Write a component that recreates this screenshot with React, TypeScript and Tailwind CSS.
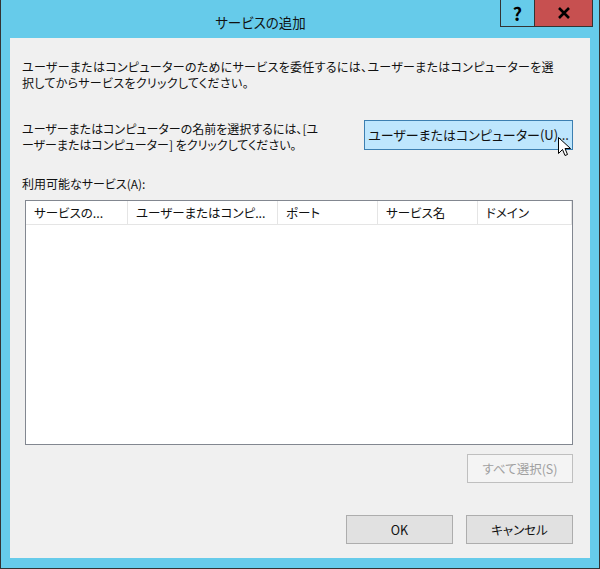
import React from "react";

const font = "font-['Noto_Sans_CJK_JP',sans-serif] [font-feature-settings:'palt']";

function Cursor() {
  return (
    <svg className="absolute left-[194px] top-[17px]" width="13" height="21" viewBox="0 0 13 21">
      <path
        d="M0.5 0.5 L0.5 16.5 L4.5 12.5 L7 18.5 L9.5 17.5 L7 11.5 L12.5 11.5 Z"
        fill="#fff"
        stroke="#000"
        strokeWidth="1"
        strokeLinejoin="miter"
      />
    </svg>
  );
}

export default function App() {
  const cols = [
    { label: "サービスの...", w: "w-[102px]" },
    { label: "ユーザーまたはコンピ...", w: "w-[150px]" },
    { label: "ポート", w: "w-[100px]" },
    { label: "サービス名", w: "w-[100px]" },
    { label: "ドメイン", w: "flex-1" },
  ];

  return (
    <div className={`w-[600px] h-[569px] flex flex-col bg-[#66cbea] border-x border-b border-[#333333] ${font}`}>
      {/* title bar */}
      <div className="h-[38px] flex items-start shrink-0">
        <div className="flex-1 h-[38px] flex items-center justify-center pl-[20px] pt-[6px] text-[13.5px] text-[#111]">
          サービスの追加
        </div>
        <div className="flex mr-[6px]">
          <div className="w-[35px] h-[27px] border border-t-0 border-[#333] flex items-center justify-center text-[18px] font-bold text-black leading-none">
            ?
          </div>
          <div className="w-[58px] h-[27px] border border-l-0 border-t-0 border-[#333] bg-[#c75050] flex items-center justify-center">
            <svg width="14" height="12" viewBox="0 0 14 12">
              <path d="M2 1 L12 11 M12 1 L2 11" stroke="#000" strokeWidth="2.6" />
            </svg>
          </div>
        </div>
      </div>

      {/* client area */}
      <div className="mx-[9px] mb-[10px] flex-1 bg-[#f0f0f0] flex flex-col pl-[12px] pr-[17px] text-[12px] leading-[16px] text-[#111]">
        <p className="mt-[21px] whitespace-nowrap tracking-[0.3px]">
          ユーザーまたはコンピューターのためにサービスを委任するには、ユーザーまたはコンピューターを選
          <br />
          択してからサービスをクリックしてください。
        </p>

        <div className="mt-[29px] flex items-start">
          <p className="flex-1 mt-[1px] whitespace-nowrap">
            ユーザーまたはコンピューターの名前を選択するには、[ユ
            <br />
            ーザーまたはコンピューター] をクリックしてください。
          </p>
          <div className="relative">
            <div className="w-[209px] h-[30px] border border-[#3c7fb1] bg-[#bee6fd] flex items-center justify-center text-[13px] text-[#111]">
              ユーザーまたはコンピューター(U)...
            </div>
            <Cursor />
          </div>
        </div>

        <p className="mt-[23px]">利用可能なサービス(A):</p>

        <div className="mt-[8px] ml-[3px] h-[245px] border border-[#828790] bg-white flex flex-col">
          <div className="h-[24px] flex border-b border-[#e5e5e5]">
            {cols.map((c) => (
              <div
                key={c.label}
                className={`${c.w} h-full border-r border-[#e5e5e5] flex items-center pl-[8px] whitespace-nowrap overflow-hidden text-[12.5px]`}
              >
                {c.label}
              </div>
            ))}
          </div>
        </div>

        <div className="mt-[9px] self-end w-[106px] h-[29px] border border-[#bfbfbf] bg-[#f4f4f4] flex items-center justify-center text-[12.5px] text-[#a0a0a0]">
          すべて選択(S)
        </div>

        <div className="mt-[32px] flex justify-end gap-[13px] text-[12.5px]">
          <div className="w-[107px] h-[29px] border border-[#adadad] bg-[#e1e1e1] flex items-center justify-center">
            OK
          </div>
          <div className="w-[107px] h-[29px] border border-[#adadad] bg-[#e1e1e1] flex items-center justify-center">
            キャンセル
          </div>
        </div>
      </div>
    </div>
  );
}
